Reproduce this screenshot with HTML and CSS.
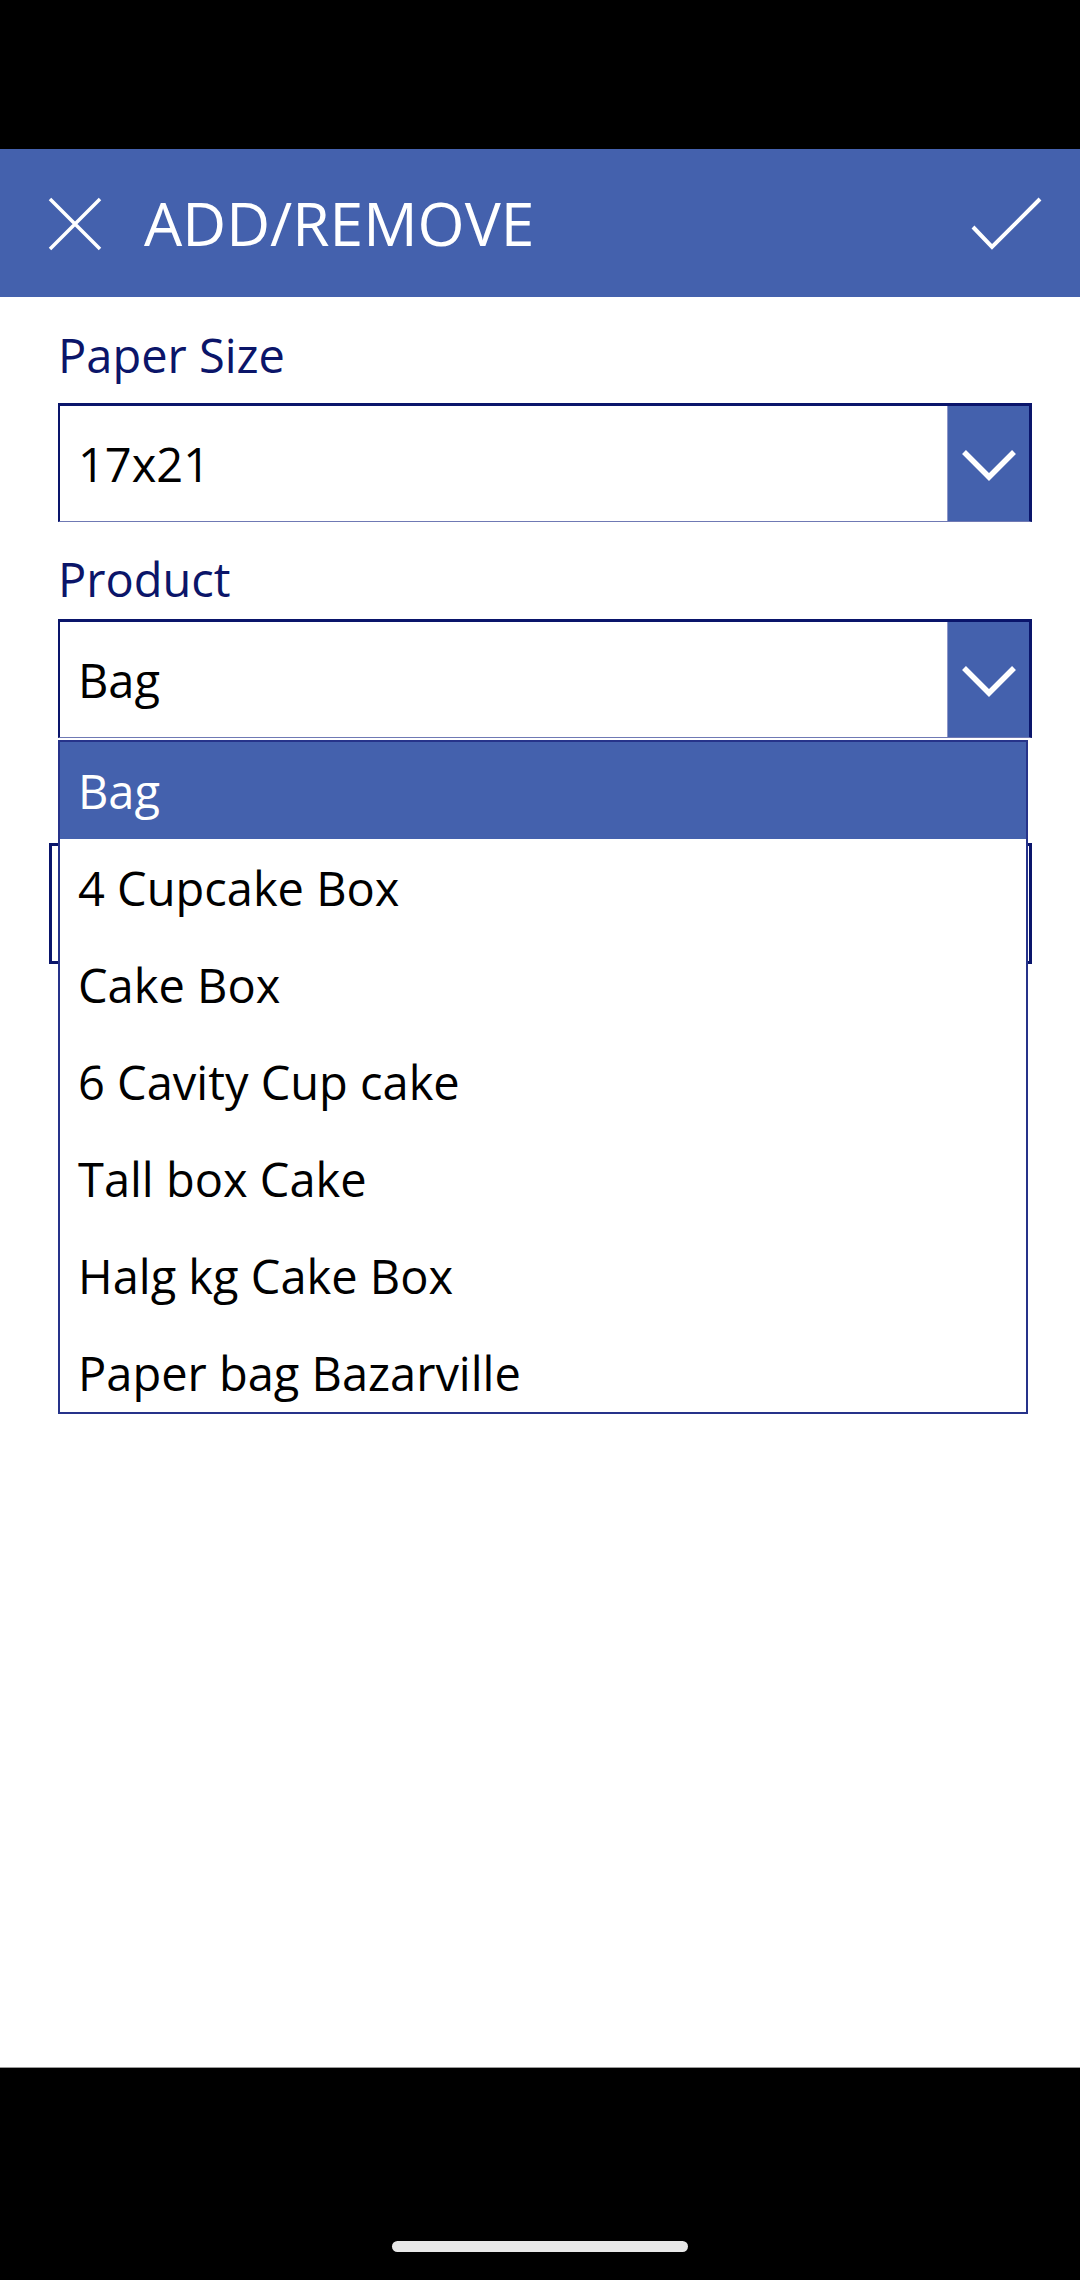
FILE: index.html
```html
<!DOCTYPE html>
<html lang="en">

<head>
    <meta charset="UTF-8">
    <meta name="viewport" content="width=device-width, initial-scale=1.0">
    <title>ADD/REMOVE</title>

    <!-- styles -->
    <link rel="stylesheet" href="styles.css">
</head>

<body>
    <div class="phone">
        <!-- status bar -->
        <div class="status-bar"></div>

        <!-- app header -->
        <header class="app-bar">
            <svg class="icon-close" viewBox="0 0 54 54" width="54" height="54">
                <path d="M2 2 L52 52 M52 2 L2 52" stroke="#fff" stroke-width="3.5" fill="none" />
            </svg>
            <h1 class="title">ADD/REMOVE</h1>
            <svg class="icon-check" viewBox="0 0 72 54" width="72" height="54">
                <polyline points="3,31 22,51 70,3" stroke="#fff" stroke-width="4" fill="none" />
            </svg>
        </header>

        <!-- form -->
        <main class="form">
            <div class="field-label label-paper">Paper Size</div>
            <div class="dropdown dropdown-paper">
                <span class="dropdown-value">17x21</span>
                <span class="dropdown-btn">
                    <svg viewBox="0 0 56 32" width="56" height="32">
                        <polyline points="3,3 28,28 53,3" stroke="#fff" stroke-width="5.5" fill="none" />
                    </svg>
                </span>
            </div>

            <div class="field-label label-product">Product</div>
            <div class="dropdown-wrap">
                <div class="dropdown dropdown-product">
                    <span class="dropdown-value">Bag</span>
                    <span class="dropdown-btn">
                        <svg viewBox="0 0 56 32" width="56" height="32">
                            <polyline points="3,3 28,28 53,3" stroke="#fff" stroke-width="5.5" fill="none" />
                        </svg>
                    </span>
                </div>

                <!-- open list -->
                <ul class="dropdown-list">
                    <li class="selected">Bag</li>
                    <li>4 Cupcake Box</li>
                    <li>Cake Box</li>
                    <li>6 Cavity Cup cake</li>
                    <li>Tall box Cake</li>
                    <li>Halg kg Cake Box</li>
                    <li>Paper bag Bazarville</li>
                </ul>
            </div>

            <!-- control hidden under the list -->
            <div class="text-box"></div>
        </main>

        <!-- navigation bar -->
        <div class="nav-bar">
            <span class="home-pill"></span>
        </div>
    </div>
</body>

</html>
```

FILE: styles.css
```css
/* reset */
* {
    margin: 0;
    padding: 0;
    box-sizing: border-box;
}

body {
    background: #000;
    font-family: "Open Sans", "Noto Sans", sans-serif;
}

.phone {
    display: flex;
    flex-direction: column;
    width: 1080px;
    height: 2280px;
    background: #fff;
}

/* status bar */
.status-bar {
    height: 149px;
    background: #000;
}

/* header */
.app-bar {
    display: flex;
    align-items: center;
    height: 148px;
    padding: 0 38px 0 48px;
    background: #4461ad;
    color: #fff;
}

.icon-close {
    display: block;
    margin-top: 2px;
}

.title {
    margin-left: 42px;
    font-size: 60.5px;
    font-weight: 400;
    line-height: 82px;
}

.icon-check {
    display: block;
    margin-left: auto;
}

/* form */
.form {
    flex: 1;
    padding: 0 48px 0 58px;
}

.field-label {
    font-size: 47px;
    line-height: 62px;
    color: #0b1569;
}

.label-paper {
    margin-top: 27px;
}

.label-product {
    margin-top: 26px;
}

.dropdown {
    display: flex;
    align-items: stretch;
    height: 119px;
    border-top: 3px solid #0a156b;
    border-left: 2px solid #0a156b;
    border-right: 3px solid #0a156b;
    border-bottom: 1px solid #6f79b4;
    background: #fff;
}

.dropdown-paper {
    margin-top: 17px;
}

.dropdown-value {
    flex: 1;
    display: flex;
    align-items: center;
    padding-left: 18px;
    font-size: 47px;
    color: #000;
}

.dropdown-btn {
    display: flex;
    align-items: center;
    justify-content: center;
    width: 82px;
    background: #4461ad;
    border-left: 1px solid #8d96c8;
}

.dropdown-btn svg {
    display: block;
    margin-top: 2px;
}

.dropdown-wrap {
    position: relative;
    margin-top: 9px;
}

/* open dropdown list */
.dropdown-list {
    position: absolute;
    top: calc(100% + 2px);
    left: 0;
    z-index: 2;
    width: 970px;
    height: 674px;
    overflow: hidden;
    list-style: none;
    background: #fff;
    border: 2px solid #26338a;
}

.dropdown-list li {
    display: flex;
    align-items: center;
    height: 97px;
    padding-left: 18px;
    font-size: 47px;
    color: #000;
    white-space: nowrap;
}

.dropdown-list li.selected {
    background: #4461ad;
    color: #fff;
}

.text-box {
    height: 121px;
    margin: 105px 0 0 -9px;
    border: 3px solid #0a156b;
    background: #fff;
}

/* navigation bar */
.nav-bar {
    display: flex;
    justify-content: center;
    align-items: flex-end;
    height: 213px;
    padding-bottom: 28px;
    background: #000;
    border-top: 1px solid #9a9a9a;
}

.home-pill {
    width: 296px;
    height: 11px;
    border-radius: 6px;
    background: #e8e8e8;
}
```
